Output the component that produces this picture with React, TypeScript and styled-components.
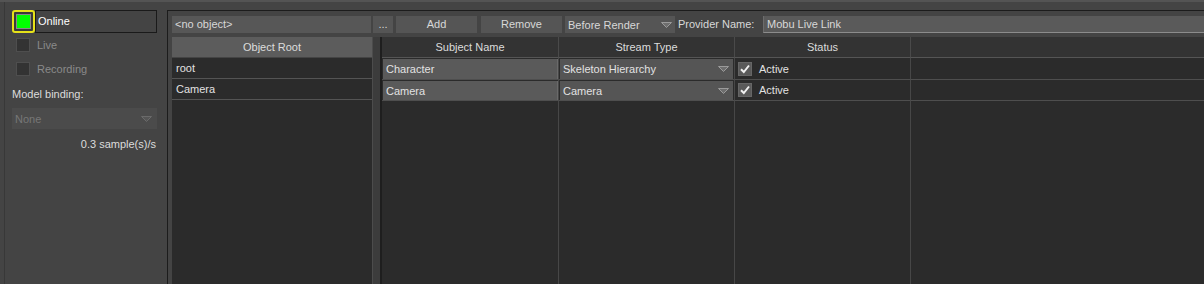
import React from 'react';
import styled, { createGlobalStyle } from 'styled-components';

const GlobalStyle = createGlobalStyle`
  html, body {
    margin: 0;
    padding: 0;
    background: #444444;
    overflow: hidden;
  }
  body {
    font-family: "Liberation Sans", Arial, sans-serif;
    font-size: 11px;
    color: #dcdcdc;
  }
  * {
    box-sizing: border-box;
  }
`;

const Screen = styled.div`
  display: flex;
  width: 1204px;
  height: 284px;
  border-top: 2px solid #545454;
  background: #444444;
  overflow: hidden;
`;

const Sidebar = styled.div`
  width: 163px;
  margin-left: 4px;
  border-left: 1px solid #383838;
  padding: 8px 10px 0 7px;
  display: flex;
  flex-direction: column;
  flex-shrink: 0;
`;

const OnlineRow = styled.div`
  display: flex;
  height: 23px;
`;

const OnlineCheck = styled.div`
  width: 23px;
  height: 23px;
  border: 2px solid #e6e219;
  border-radius: 3px;
  background: #3a3a3a;
  display: flex;
  align-items: center;
  justify-content: center;
`;

const GreenLed = styled.div`
  width: 15px;
  height: 15px;
  border: 1px solid #8a8a8a;
  background: #00ff00;
`;

const OnlineLabel = styled.div`
  flex: 1;
  border: 1px solid #1a1a1a;
  padding-left: 2px;
  line-height: 21px;
  color: #ffffff;
`;

const CheckRow = styled.div<{ $muted?: boolean }>`
  display: flex;
  align-items: center;
  gap: 7px;
  height: 24px;
  padding-left: 4px;
  color: ${(p) => (p.$muted ? '#8a8a8a' : '#dcdcdc')};
`;

const Box = styled.div`
  width: 14px;
  height: 14px;
  border: 1px solid #4e4e4e;
  background: #333333;
  flex-shrink: 0;
`;

const FieldLabel = styled.div`
  margin-top: 6px;
  line-height: 14px;
  color: #dcdcdc;
`;

const DisabledSelect = styled.div`
  margin-top: 7px;
  height: 21px;
  background: #4b4b4b;
  color: #777777;
  display: flex;
  align-items: center;
  justify-content: space-between;
  padding: 0 5px 0 3px;
`;

const Rate = styled.div`
  margin-top: 8px;
  line-height: 14px;
  text-align: right;
  padding-right: 1px;
  color: #dcdcdc;
`;

const Main = styled.div`
  flex: 1;
  margin-top: 8px;
  border-top: 1px solid #1c1c1c;
  border-left: 1px solid #1c1c1c;
  padding: 5px 0 0 4px;
  display: flex;
  flex-direction: column;
  min-width: 0;
`;

const Toolbar = styled.div`
  display: flex;
  height: 17px;
  margin-bottom: 4px;
  flex-shrink: 0;
`;

const Field = styled.div<{ $w?: number }>`
  width: ${(p) => (p.$w ? `${p.$w}px` : 'auto')};
  flex: ${(p) => (p.$w ? '0 0 auto' : '1')};
  background: #575757;
  color: #d8d8d8;
  line-height: 17px;
  padding-left: 3px;
  white-space: nowrap;
  overflow: hidden;
`;

const ProviderField = styled(Field)`
  background: #5a5a5a;
  border-left: 1px solid #6c6c6c;
  border-bottom: 1px solid #8c8c8c;
  line-height: 16px;
`;

const ToolButton = styled.div<{ $w: number; $ml: number }>`
  width: ${(p) => p.$w}px;
  margin-left: ${(p) => p.$ml}px;
  flex-shrink: 0;
  background: #555555;
  color: #d8d8d8;
  text-align: center;
  line-height: 17px;
`;

const Combo = styled.div<{ $w?: number; $ml?: number }>`
  width: ${(p) => (p.$w ? `${p.$w}px` : 'auto')};
  margin-left: ${(p) => p.$ml || 0}px;
  flex-shrink: 0;
  background: #555555;
  color: #d8d8d8;
  display: flex;
  align-items: center;
  justify-content: space-between;
  padding: 0 3px 0 3px;
  white-space: nowrap;
`;

const ToolLabel = styled.div`
  margin-left: 3px;
  width: 85px;
  flex-shrink: 0;
  line-height: 17px;
  color: #d8d8d8;
`;

const Body = styled.div`
  flex: 1;
  display: flex;
  min-height: 0;
`;

const ObjectPane = styled.div`
  width: 200px;
  flex-shrink: 0;
  background: #2b2b2b;
`;

const ObjectHeader = styled.div`
  height: 21px;
  background: #5c5c5c;
  border-bottom: 1px solid #444444;
  text-align: center;
  line-height: 20px;
  color: #dcdcdc;
`;

const ObjectRow = styled.div`
  height: 21px;
  border-bottom: 1px solid #545454;
  padding-left: 4px;
  line-height: 20px;
  color: #e2e2e2;
`;

const Splitter = styled.div`
  width: 10px;
  flex-shrink: 0;
  border-left: 1px solid #4c4c4c;
  border-right: 2px solid #1e1e1e;
  background: #3c3c3c;
`;

const Grid = styled.div`
  flex: 1;
  display: grid;
  grid-template-columns: 177px 176px 176px 1fr;
  grid-template-rows: 21px 22px 21px 1fr;
  background: #2b2b2b;
  min-width: 0;
`;

const HeadCell = styled.div<{ $last?: boolean }>`
  background: #333333;
  border-bottom: 1px solid #555555;
  border-right: ${(p) => (p.$last ? 'none' : '1px solid #4a4a4a')};
  text-align: center;
  line-height: 20px;
  color: #dcdcdc;
`;

const Cell = styled.div<{ $last?: boolean; $noLine?: boolean }>`
  border-bottom: ${(p) => (p.$noLine ? 'none' : '1px solid #4e4e4e')};
  border-right: ${(p) => (p.$last ? 'none' : '1px solid #474747')};
  display: flex;
  align-items: stretch;
  min-width: 0;
`;

const NameBox = styled.div`
  flex: 1;
  margin: 1px 0 0 1px;
  background: #5a5a5a;
  border-right: 1px solid #6a6a6a;
  padding-left: 3px;
  display: flex;
  align-items: center;
  color: #e2e2e2;
`;

const TypeBox = styled(NameBox)`
  background: #555555;
  border-right: none;
  justify-content: space-between;
  padding-right: 4px;
  margin-right: 1px;
`;

const StatusBox = styled.div`
  display: flex;
  align-items: center;
  gap: 7px;
  padding-left: 3px;
  color: #e2e2e2;
`;

const CheckBox = styled.div`
  width: 14px;
  height: 14px;
  background: #5a5a5a;
  border: 1px solid #666666;
  display: flex;
  align-items: center;
  justify-content: center;
`;

const Arrow = ({ dim }: { dim?: boolean }) => (
  <svg width="11" height="6" viewBox="0 0 11 6">
    <polygon
      points="0.5,0.5 10.5,0.5 5.5,5.5"
      fill={dim ? '#555555' : '#6e6e6e'}
      stroke={dim ? '#6a6a6a' : '#9a9a9a'}
      strokeWidth="1"
    />
  </svg>
);

const Tick = () => (
  <svg width="12" height="12" viewBox="0 0 12 12">
    <path d="M2 6.2 L4.8 9 L10 2.5" fill="none" stroke="#f0f0f0" strokeWidth="2" />
  </svg>
);

const subjects = [
  { name: 'Character', type: 'Skeleton Hierarchy' },
  { name: 'Camera', type: 'Camera' },
];

const App: React.FC = () => {
  return (
    <>
      <GlobalStyle />
      <Screen>
        <Sidebar>
          <OnlineRow>
            <OnlineCheck>
              <GreenLed />
            </OnlineCheck>
            <OnlineLabel>Online</OnlineLabel>
          </OnlineRow>
          <CheckRow $muted>
            <Box />
            Live
          </CheckRow>
          <CheckRow $muted>
            <Box />
            Recording
          </CheckRow>
          <FieldLabel>Model binding:</FieldLabel>
          <DisabledSelect>
            None
            <Arrow dim />
          </DisabledSelect>
          <Rate>0.3 sample(s)/s</Rate>
        </Sidebar>

        <Main>
          <Toolbar>
            <Field $w={199}>&lt;no object&gt;</Field>
            <ToolButton $w={20} $ml={2}>...</ToolButton>
            <ToolButton $w={81} $ml={3}>Add</ToolButton>
            <ToolButton $w={81} $ml={4}>Remove</ToolButton>
            <Combo $w={110} $ml={3}>
              Before Render
              <Arrow />
            </Combo>
            <ToolLabel>Provider Name:</ToolLabel>
            <ProviderField>Mobu Live Link</ProviderField>
          </Toolbar>

          <Body>
            <ObjectPane>
              <ObjectHeader>Object Root</ObjectHeader>
              <ObjectRow>root</ObjectRow>
              <ObjectRow>Camera</ObjectRow>
            </ObjectPane>
            <Splitter />
            <Grid>
              <HeadCell>Subject Name</HeadCell>
              <HeadCell>Stream Type</HeadCell>
              <HeadCell>Status</HeadCell>
              <HeadCell $last />
              {subjects.map((s) => (
                <React.Fragment key={s.name}>
                  <Cell>
                    <NameBox>{s.name}</NameBox>
                  </Cell>
                  <Cell>
                    <TypeBox>
                      {s.type}
                      <Arrow />
                    </TypeBox>
                  </Cell>
                  <Cell>
                    <StatusBox>
                      <CheckBox>
                        <Tick />
                      </CheckBox>
                      Active
                    </StatusBox>
                  </Cell>
                  <Cell $last />
                </React.Fragment>
              ))}
              <Cell $noLine />
              <Cell $noLine />
              <Cell $noLine />
              <Cell $noLine $last />
            </Grid>
          </Body>
        </Main>
      </Screen>
    </>
  );
};

export default App;
